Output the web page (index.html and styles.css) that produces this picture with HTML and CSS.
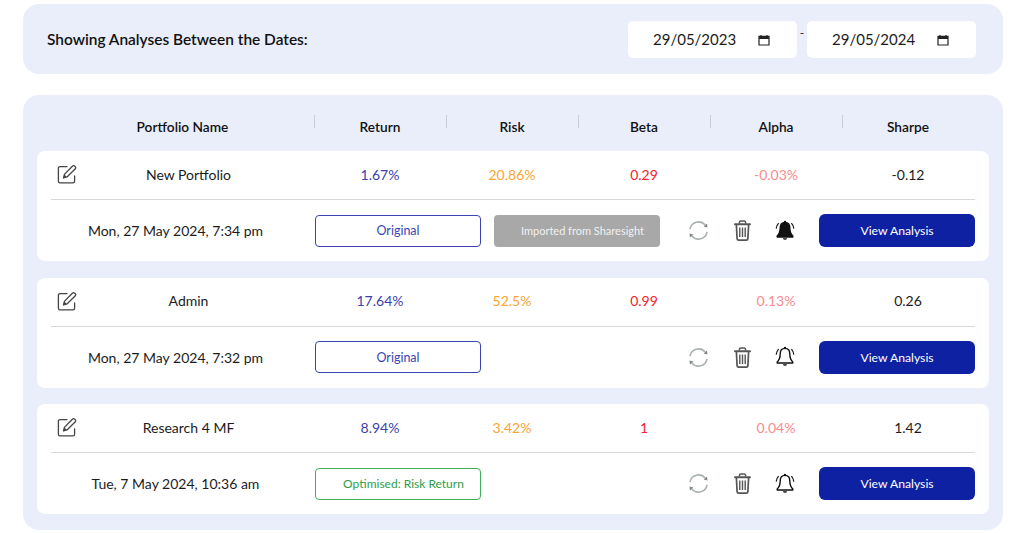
FILE: index.html
```html
<!DOCTYPE html>
<html lang="en">
<head>
    <meta charset="UTF-8">
    <meta name="viewport" content="width=device-width, initial-scale=1.0">
    <title>Portfolio Analyses</title>
    <link rel="stylesheet" href="styles.css">
</head>
<body>
    <svg class="defs" width="0" height="0">
        <symbol id="i-cal" viewBox="0 0 12 12">
            <path d="M1 2.4h10v8.6H1z M1 4.4h10" fill="none" stroke="currentColor" stroke-width="1.2"/>
            <path d="M1 2h10v2.6H1z" fill="currentColor"/>
            <path d="M3 1v1.5M9 1v1.5" stroke="currentColor" stroke-width="1.2"/>
        </symbol>
        <symbol id="i-edit" viewBox="0 0 20 20">
            <path d="M10 2.6H3a1.6 1.6 0 0 0-1.6 1.6v13a1.6 1.6 0 0 0 1.6 1.6h13a1.6 1.6 0 0 0 1.6-1.6V12" fill="none" stroke="#444" stroke-width="1.3" stroke-linecap="round"/>
            <path d="M6.5 14l.9-3.6L15.6 2a1.3 1.3 0 0 1 1.9 0l.8.8a1.3 1.3 0 0 1 0 1.9L10 13z" fill="none" stroke="#444" stroke-width="1.3" stroke-linejoin="round"/>
            <path d="M6.5 14l.9-3.6 2.6 2.6z" fill="#444"/>
        </symbol>
        <symbol id="i-sync" viewBox="0 0 22 22">
            <path d="M2 9.6A9.2 9.2 0 0 1 18 5.2M20 12.4A9.2 9.2 0 0 1 4 16.8" fill="none" stroke="#a9b2ae" stroke-width="1.7"/>
            <path d="M20.4 7.8l-.5-4.2-3.6 3.2z M1.6 14.2l.5 4.2 3.6-3.2z" fill="#7f8884"/>
        </symbol>
        <symbol id="i-trash" viewBox="0 0 17 21">
            <path d="M1 4.2h15" stroke="#555" stroke-width="1.9" stroke-linecap="round"/>
            <path d="M5.4 3.6V2.4A1.4 1.4 0 0 1 6.8 1h3.4a1.4 1.4 0 0 1 1.4 1.4v1.2" fill="none" stroke="#555" stroke-width="1.5"/>
            <path d="M2.4 5l.7 13.6a1.6 1.6 0 0 0 1.6 1.5h7.6a1.6 1.6 0 0 0 1.6-1.5L14.6 5" fill="none" stroke="#555" stroke-width="1.7"/>
            <path d="M5.8 7.6v9.4M8.5 7.6v9.4M11.2 7.6v9.4" stroke="#555" stroke-width="1.4"/>
        </symbol>
        <symbol id="i-bell" viewBox="0 0 20 22">
            <path d="M10 2.4c-3.2 0-4.8 2.6-4.8 5.6 0 4-1 6-3 8v1h15.6v-1c-2-2-3-4-3-8 0-3-1.6-5.6-4.8-5.6z" fill="var(--bell-fill)" stroke="#111" stroke-width="1.4" stroke-linejoin="round"/>
            <circle cx="10" cy="2" r="1.2" fill="#111"/>
            <path d="M7.8 18.2a2.3 2.3 0 0 0 4.4 0z" fill="#111"/>
            <path d="M3.6 3.2A9 9 0 0 0 1.2 8.6M16.4 3.2a9 9 0 0 1 2.4 5.4" fill="none" stroke="#111" stroke-width="1.2"/>
        </symbol>
    </svg>

    <main class="page">
        <section class="panel filter">
            <h2>Showing Analyses Between the Dates:</h2>
            <div class="dates">
                <div class="date-box">
                    <span>29/05/2023</span>
                    <svg class="cal"><use href="#i-cal"/></svg>
                </div>
                <span class="dash">-</span>
                <div class="date-box">
                    <span>29/05/2024</span>
                    <svg class="cal"><use href="#i-cal"/></svg>
                </div>
            </div>
        </section>

        <section class="panel list">
            <div class="grid heads">
                <div>Portfolio Name</div>
                <div class="sep">Return</div>
                <div class="sep">Risk</div>
                <div class="sep">Beta</div>
                <div class="sep">Alpha</div>
                <div class="sep">Sharpe</div>
            </div>

            <article class="card">
                <div class="grid stats">
                    <div class="name">
                        <svg class="edit"><use href="#i-edit"/></svg>
                        <span>New Portfolio</span>
                    </div>
                    <div class="ret">1.67%</div>
                    <div class="risk">20.86%</div>
                    <div class="beta">0.29</div>
                    <div class="alpha">-0.03%</div>
                    <div>-0.12</div>
                </div>
                <div class="meta">
                    <div class="when">Mon, 27 May 2024, 7:34 pm</div>
                    <div class="tag tag-blue">Original</div>
                    <div class="tag tag-grey">Imported from Sharesight</div>
                    <div class="tools">
                        <svg class="sync"><use href="#i-sync"/></svg>
                        <svg class="trash"><use href="#i-trash"/></svg>
                        <svg class="bell bell-on"><use href="#i-bell"/></svg>
                    </div>
                    <button class="view" type="button">View Analysis</button>
                </div>
            </article>

            <article class="card">
                <div class="grid stats">
                    <div class="name">
                        <svg class="edit"><use href="#i-edit"/></svg>
                        <span>Admin</span>
                    </div>
                    <div class="ret">17.64%</div>
                    <div class="risk">52.5%</div>
                    <div class="beta">0.99</div>
                    <div class="alpha">0.13%</div>
                    <div>0.26</div>
                </div>
                <div class="meta">
                    <div class="when">Mon, 27 May 2024, 7:32 pm</div>
                    <div class="tag tag-blue">Original</div>
                    <div class="tag tag-none"></div>
                    <div class="tools">
                        <svg class="sync"><use href="#i-sync"/></svg>
                        <svg class="trash"><use href="#i-trash"/></svg>
                        <svg class="bell"><use href="#i-bell"/></svg>
                    </div>
                    <button class="view" type="button">View Analysis</button>
                </div>
            </article>

            <article class="card">
                <div class="grid stats">
                    <div class="name">
                        <svg class="edit"><use href="#i-edit"/></svg>
                        <span>Research 4 MF</span>
                    </div>
                    <div class="ret">8.94%</div>
                    <div class="risk">3.42%</div>
                    <div class="beta">1</div>
                    <div class="alpha">0.04%</div>
                    <div>1.42</div>
                </div>
                <div class="meta">
                    <div class="when">Tue, 7 May 2024, 10:36 am</div>
                    <div class="tag tag-green">Optimised: Risk Return</div>
                    <div class="tag tag-none"></div>
                    <div class="tools">
                        <svg class="sync"><use href="#i-sync"/></svg>
                        <svg class="trash"><use href="#i-trash"/></svg>
                        <svg class="bell"><use href="#i-bell"/></svg>
                    </div>
                    <button class="view" type="button">View Analysis</button>
                </div>
            </article>
        </section>
    </main>
</body>
</html>
```

FILE: styles.css
```css
body {
    font-family: Lato, "Open Sans", sans-serif;
    margin: 0;
    padding: 0;
    background-color: #ffffff;
    color: #1c1c1c;
    overflow: hidden;
}

.defs {
    display: block;
}

.page {
    padding: 4px 21px 0 23px;
}

.panel {
    background-color: #eaeefa;
    border-radius: 16px;
}

/* date filter */
.filter {
    height: 70px;
    box-sizing: border-box;
    padding: 17px 27px 0 24px;
    display: flex;
    justify-content: space-between;
    margin-bottom: 21px;
}

.filter h2 {
    margin: 0;
    height: 37px;
    line-height: 36px;
    font-size: 15.45px;
    font-weight: 600;
    color: #111;
}

.dates {
    display: flex;
}

.date-box {
    width: 169px;
    height: 37px;
    box-sizing: border-box;
    padding: 0 27px 2px 25px;
    background-color: #fff;
    border-radius: 5px;
    display: flex;
    align-items: center;
    justify-content: space-between;
    font-size: 15px;
}

.cal {
    width: 12px;
    height: 12px;
    color: #222;
    margin-top: 3px;
}

.dash {
    width: 10px;
    text-align: center;
    font-size: 12px;
    line-height: 24px;
}

/* table */
.list {
    height: 435px;
    box-sizing: border-box;
    padding: 0 14px;
}

.grid {
    display: grid;
    grid-template-columns: 263px repeat(5, 132px);
    align-items: center;
    text-align: center;
}

.heads {
    height: 56px;
    box-sizing: border-box;
    padding: 6px 14px 0;
    font-size: 13.7px;
    font-weight: 600;
    color: #111;
}

.sep {
    position: relative;
}

.sep::before {
    content: "";
    position: absolute;
    left: 0;
    top: -3px;
    width: 1px;
    height: 13px;
    background-color: #c9ccd4;
}

.card {
    height: 110px;
    background-color: #fff;
    border-radius: 8px;
    padding: 0 14px;
    margin-bottom: 16.5px;
}

.card:last-child {
    margin-bottom: 0;
}

.stats {
    height: 49px;
    border-bottom: 1px solid #d9d9d9;
    box-sizing: border-box;
    padding-bottom: 2px;
    font-size: 14px;
}

.name {
    display: grid;
    grid-template-columns: 30px 1fr;
    align-items: center;
    padding: 0 24px 0 6px;
}

.edit {
    width: 20px;
    height: 20px;
}

.ret {
    color: #3b3fb0;
}

.risk {
    color: #f9a533;
}

.beta {
    color: #f5222d;
}

.alpha {
    color: #f98b8f;
}

.meta {
    height: 61px;
    display: flex;
    align-items: center;
    font-size: 14px;
}

.when {
    width: 249px;
    flex: none;
    text-align: center;
    margin-right: 15px;
}

.tag {
    width: 166px;
    height: 32px;
    box-sizing: border-box;
    flex: none;
    border-radius: 4px;
    display: flex;
    align-items: center;
    justify-content: center;
    font-size: 12.5px;
}

.tag + .tag {
    margin-left: 13px;
}

.tag-blue {
    border: 1px solid #3b45b5;
    color: #3b45b5;
}

.tag-green {
    border: 1px solid #3fae5a;
    color: #2f9e4a;
    font-size: 12px;
    padding-left: 11px;
}

.tag-grey {
    background-color: #a8a8a8;
    color: #f1f1f1;
    font-size: 11px;
    padding-left: 11px;
}

.tools {
    display: flex;
    align-items: center;
    justify-content: space-between;
    width: 107px;
    margin-left: 28px;
    flex: none;
}

.sync {
    width: 21px;
    height: 21px;
}

.trash {
    width: 17px;
    height: 21px;
}

.bell {
    --bell-fill: none;
    width: 20px;
    height: 22px;
}

.bell-on {
    --bell-fill: #111;
}

.view {
    margin-left: auto;
    width: 156px;
    height: 33px;
    border: 0;
    border-radius: 6px;
    background-color: #0f21a3;
    color: #fff;
    font-family: inherit;
    font-size: 12.2px;
    cursor: pointer;
}
```
